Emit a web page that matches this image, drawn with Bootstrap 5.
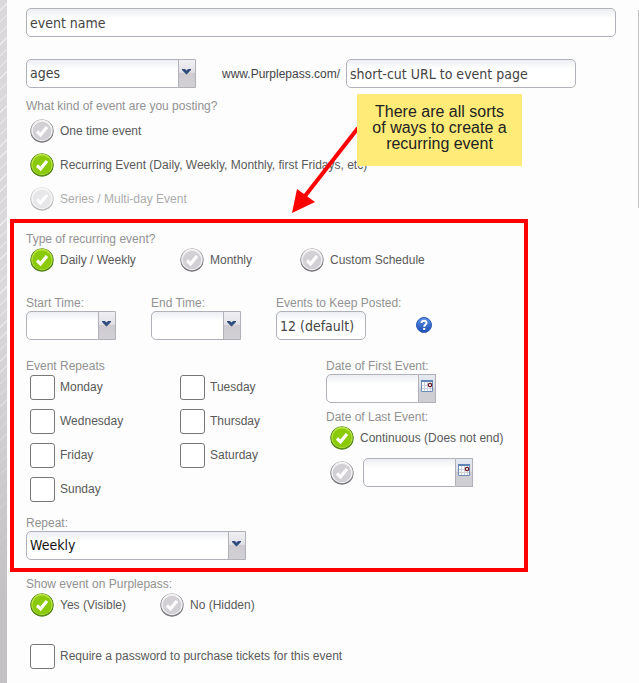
<!DOCTYPE html>
<html lang="en">
<head>
<meta charset="utf-8">
<meta name="viewport" content="width=device-width, initial-scale=1">
<title>Event details</title>
<link href="https://cdn.jsdelivr.net/npm/bootstrap@5.3.0/dist/css/bootstrap.min.css" rel="stylesheet">
<style>
body{font:12px/16px "Liberation Sans",Arial,sans-serif;color:#5a5a5a;background:#fdfdfd}
.page-shell{min-height:100vh}
/* hatched strip along the left edge */
.edge-strip{width:7px;background:linear-gradient(180deg,#dcdadc00 0,#d2d0d200 300px,#c3c1c3 600px),repeating-linear-gradient(135deg,#dad8db 0 7px,#eceaed 7px 8px)}
.event-form{padding:8px 23px 12px 3px}
.inset{padding-left:16px}
.caption{color:#929292;display:block;margin:0;padding:0;font-size:12px;line-height:16px;float:none}
.field{height:29px;padding:0 3px;border:1px solid #b1b1b9;border-radius:5px;font:14px/27px "DejaVu Sans Condensed","Open Sans",sans-serif;color:#444;background:linear-gradient(#eceef2,#fff 9px)}
.field::placeholder{color:#444;opacity:1}
.field:focus{box-shadow:none;border-color:#7d8fb3}
.pick{appearance:none;border-radius:5px 0 0 5px;padding-right:22px;
 background:url("data:image/svg+xml,%3Csvg xmlns='http://www.w3.org/2000/svg' viewBox='0 0 9 6'%3E%3Cpath d='M0 0h3l1.5 1.5L6 0h3v1L4.500 5.500 0 1z' fill='%232f4c7c'/%3E%3C/svg%3E") right 4px top 9px/9px 6px no-repeat,
 linear-gradient(#b1b1b9,#b1b1b9) right 16px top/1px 100% no-repeat,
 linear-gradient(#efeff4,#e2e1e6 45%,#cdcbd0 50%,#d3d1d6) right/16px 100% no-repeat,
 linear-gradient(#eceef2,#fff 9px)}
.pick-long{width:220px;color:#111}
.pick-mid{width:170px}
.w-short{width:90px}
.w-url{width:230px}
.date-group{width:110px}
.date-group .field{border-radius:5px 0 0 5px;min-width:0}
.cal-btn{flex:none;width:17px;height:29px;padding:0 0 5px;border:1px solid #b1b1b9;border-left:0;background:linear-gradient(#e4e8f0,#dfe1e8 45%,#cfced3 50%)}
.cal-btn svg{display:block;margin:auto}
.choice{display:flex;align-items:center;min-height:26px;padding-left:4px;gap:6px}
.choice input{appearance:none;flex:none;width:24px;height:24px;margin:0}
.choice input[type=radio]{border-radius:50%;background:url("data:image/svg+xml,%3Csvg xmlns='http://www.w3.org/2000/svg' viewBox='0 0 24 24'%3E%3Cdefs%3E%3ClinearGradient id='g' x2='0' y2='1'%3E%3Cstop stop-color='%23aaa8aa'/%3E%3Cstop offset='1' stop-color='%2375757a'/%3E%3C/linearGradient%3E%3C/defs%3E%3Ccircle cx='12' cy='12' r='11.800' fill='url(%23g)'/%3E%3Ccircle cx='12' cy='11.500' r='10.700' fill='%23f4f3f4'/%3E%3Ccircle cx='12' cy='12' r='9.300' fill='%23d2d0d4'/%3E%3Cpath d='M7 12.500l3.500 3.300L17 8' fill='none' stroke='%23fff' stroke-width='3.200'/%3E%3C/svg%3E") center/24px no-repeat}
.choice input[type=radio]:checked{background-image:url("data:image/svg+xml,%3Csvg xmlns='http://www.w3.org/2000/svg' viewBox='0 0 24 24'%3E%3Ccircle cx='12' cy='12' r='11.800' fill='%23508516'/%3E%3Ccircle cx='12' cy='11.500' r='10.700' fill='%23b9e343'/%3E%3Ccircle cx='12' cy='12' r='9.600' fill='%238aca08'/%3E%3Cpath d='M7 12.500l3.500 3.300L17 8' fill='none' stroke='%23fff' stroke-width='3.200'/%3E%3C/svg%3E")}
.choice input[type=checkbox]{width:25px;height:25px;margin-right:-1px;border:1px solid #777;border-radius:3px;background:#fff}
.choice input[type=checkbox]:checked{background:#8aca08}
.is-off{opacity:.5}
.choice-stack{display:grid;gap:8px}
.col-150{width:150px}
.col-125{width:125px}
.col-120{width:120px}
.col-130{width:130px}
.days-grid{display:grid;grid-template-columns:150px 150px;row-gap:8px}
.recurring-box{border:4px solid #f00;padding:8px 12px;width:518px;max-width:100%;margin-top:7px}
.help-btn{width:16px;height:16px;padding:0;border:0;background:none;margin-bottom:7px}
.help-btn svg{display:block}
.pick-row{margin-top:22px}
.url-label{margin:0 3px 0 26px;color:#444;width:121px;white-space:nowrap}
.kind-set{margin-top:10px}
.times-row{margin-top:22px}
.keep-col{width:140px}
.days-row{margin-top:18px}
.last-set{margin-top:6px}
.last-date{margin-top:7px;gap:9px}
.choice .last-field{width:93px;height:29px}
.repeat-row{margin-top:13px}
.pass-row{margin-top:25px}
/* note and arrow lying over the form */
.note{position:absolute;left:357px;top:94px;width:165px;padding:10px 14px 14px;background:#ffec78;color:#222;font-size:16px;line-height:16px;text-align:center}
.note-arrow{position:absolute;left:288px;top:122px;pointer-events:none}
.side-rule{position:absolute;right:0;top:10px;width:1px;height:198px;background:#c4c4c6}
</style>
<script src="https://cdn.jsdelivr.net/npm/bootstrap@5.3.0/dist/js/bootstrap.bundle.min.js"></script>
</head>
<body>
<svg class="d-none" aria-hidden="true">
 <symbol id="cal" viewBox="0 0 12 12"><path fill="#fff" stroke="#6c8cb8" d="M.5.5h11v11H.5z"/><path fill="#5f83b5" d="M0 0h12v2H0z"/><path stroke="#ccd0d8" d="M3.500 2v9M6.500 2v9M9.500 2v9M1 5.500h10M1 8.500h10"/><circle cx="9" cy="5" r="1.700" fill="#fff" stroke="#6d1522" stroke-width="1.200"/></symbol>
</svg>
<div class="page-shell d-flex position-relative">
 <div class="edge-strip flex-shrink-0"></div>
 <form class="event-form flex-grow-1">
  <div class="inset">
   <input class="field form-control" type="text" placeholder="event name" aria-label="Event name">
   <div class="d-flex align-items-center pick-row">
    <select class="field pick pick-mid" aria-label="Ages"><option>ages</option></select>
    <label class="url-label" for="url">www.Purplepass.com/</label>
    <input class="field w-url" id="url" type="text" placeholder="short-cut URL to event page">
   </div>
   <fieldset class="kind-set">
    <legend class="caption">What kind of event are you posting?</legend>
    <div class="choice-stack pt-1">
     <label class="choice"><input type="radio" name="kind">One time event</label>
     <label class="choice"><input type="radio" name="kind" checked>Recurring Event (Daily, Weekly, Monthly, first Fridays, etc)</label>
     <label class="choice is-off"><input type="radio" name="kind" disabled>Series / Multi-day Event</label>
    </div>
   </fieldset>
  </div>

  <section class="recurring-box">
   <fieldset>
    <legend class="caption">Type of recurring event?</legend>
    <div class="d-flex">
     <label class="choice col-150"><input type="radio" name="type" checked>Daily / Weekly</label>
     <label class="choice col-120"><input type="radio" name="type">Monthly</label>
     <label class="choice"><input type="radio" name="type">Custom Schedule</label>
    </div>
   </fieldset>
   <div class="d-flex align-items-end times-row">
    <div class="col-125"><label class="caption" for="start">Start Time:</label><select class="field pick w-short d-block" id="start"><option></option></select></div>
    <div class="col-125"><label class="caption" for="end">End Time:</label><select class="field pick w-short d-block" id="end"><option></option></select></div>
    <div class="keep-col"><label class="caption" for="keep">Events to Keep Posted:</label><input class="field w-short d-block" id="keep" type="text" value="12 (default)"></div>
    <button class="help-btn" type="button" aria-label="Help"><svg width="16" height="16" viewBox="0 0 16 16"><defs><linearGradient id="hb" x2="0" y2="1"><stop stop-color="#5d94e6"/><stop offset="1" stop-color="#1c4bb4"/></linearGradient></defs><circle cx="8" cy="8" r="7.500" fill="url(#hb)" stroke="#2b59b5"/><path d="M5.500 6C5.500 2.800 10.700 2.900 10.500 6 10.300 7.800 8.200 7.700 8.200 9.800M8.200 11v2" fill="none" stroke="#fff" stroke-width="2"/></svg></button>
   </div>
   <div class="d-flex days-row">
    <fieldset>
     <legend class="caption">Event Repeats</legend>
     <div class="days-grid">
      <label class="choice"><input type="checkbox">Monday</label>
      <label class="choice"><input type="checkbox">Tuesday</label>
      <label class="choice"><input type="checkbox">Wednesday</label>
      <label class="choice"><input type="checkbox">Thursday</label>
      <label class="choice"><input type="checkbox">Friday</label>
      <label class="choice"><input type="checkbox">Saturday</label>
      <label class="choice"><input type="checkbox">Sunday</label>
     </div>
    </fieldset>
    <div>
     <label class="caption" for="first">Date of First Event:</label>
     <div class="date-group d-flex"><input class="field flex-grow-1" id="first" type="text"><button class="cal-btn" type="button" aria-label="Pick first date"><svg width="12" height="12"><use href="#cal"/></svg></button></div>
     <fieldset class="last-set">
      <legend class="caption">Date of Last Event:</legend>
      <label class="choice"><input type="radio" name="last" checked>Continuous (Does not end)</label>
      <div class="choice last-date"><input type="radio" name="last" aria-label="Ends on date"><div class="date-group d-flex"><input class="field last-field" type="text" aria-label="Date of last event"><button class="cal-btn" type="button" aria-label="Pick last date"><svg width="12" height="12"><use href="#cal"/></svg></button></div></div>
     </fieldset>
    </div>
   </div>
   <div class="repeat-row">
    <label class="caption" for="repeat">Repeat:</label>
    <select class="field pick pick-long d-block" id="repeat"><option>Weekly</option></select>
   </div>
  </section>

  <div class="inset pt-1">
   <fieldset>
    <legend class="caption">Show event on Purplepass:</legend>
    <div class="d-flex">
     <label class="choice col-130"><input type="radio" name="show" checked>Yes (Visible)</label>
     <label class="choice"><input type="radio" name="show">No (Hidden)</label>
    </div>
   </fieldset>
   <label class="choice pass-row"><input type="checkbox">Require a password to purchase tickets for this event</label>
  </div>
 </form>
 <div class="side-rule"></div>
 <svg class="note-arrow" width="74" height="94" viewBox="0 0 74 94" aria-hidden="true"><path d="M70 6 17 74" stroke="#f00" stroke-width="4"/><path fill="#f00" d="M4 91 9 67 27 80z"/></svg>
 <div class="note">There are all sorts of ways to create a recurring event</div>
</div>
</body>
</html>
